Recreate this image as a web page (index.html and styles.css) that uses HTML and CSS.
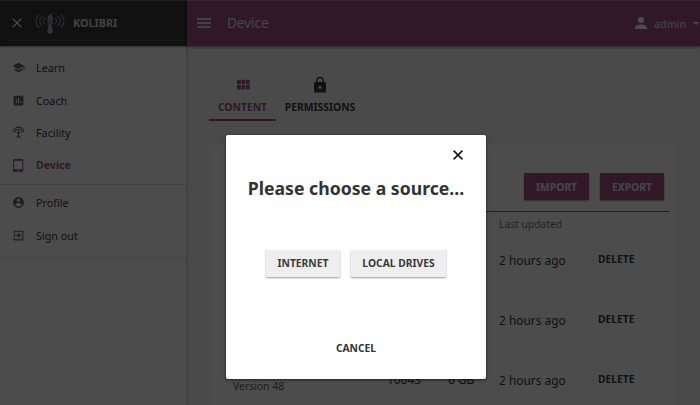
FILE: index.html
```html
<!DOCTYPE html>
<html lang="en">
<head>
<meta charset="utf-8">
<title>Device - Kolibri</title>
<link rel="stylesheet" href="styles.css">
</head>
<body>
<div class="app">
  <aside class="sidebar">
    <header class="brand">
      <svg class="brand-close" viewBox="0 0 10 10"><path d="M.6.6 9.4 9.4M9.4.6.6 9.4"/></svg>
      <svg class="brand-logo" viewBox="0 0 30 24">
        <g fill="none" stroke="#8b95a2" stroke-width="1.1">
          <path d="M4.2 3.5Q-2.5 10 4.2 16.8M7.3 5.2Q2 10 7.3 15.2M10 7Q7 10 10 13.5"/>
          <path d="M25.8 3.5Q32.5 10 25.8 16.8M22.7 5.2Q28 10 22.7 15.2M20 7Q23 10 20 13.5"/>
        </g>
        <path fill="#94a3b0" d="M21 .8 16.2 4.1Q18.5 6 18 9.5L17.3 14H13L12.4 8.4Q12.4 4.8 14.8 3.6Z"/>
        <path fill="#788a9a" d="M13 8.5h4.8L17 14.5h-3.6Z"/>
        <path fill="#b79dba" d="M13.8 14h2.6l1.6 6.5q-.7 2.2-2.9 2.2t-2.9-2.2Z"/>
      </svg>
      <span class="brand-name">KOLIBRI</span>
    </header>
    <nav class="menu">
      <a class="item"><svg viewBox="0 0 24 24"><path d="M5 13.2v4L12 21l7-3.8v-4L12 17zM12 3 1 9l11 6 9-4.9V17h2V9z"/></svg>Learn</a>
      <a class="item"><svg viewBox="0 0 24 24"><path d="M19 3H5a2 2 0 0 0-2 2v14a2 2 0 0 0 2 2h14a2 2 0 0 0 2-2V5a2 2 0 0 0-2-2zM9 17H7v-7h2zm4 0h-2V7h2zm4 0h-2v-4h2z"/></svg>Coach</a>
      <a class="item"><svg viewBox="0 0 24 24"><path d="M12 5a7 7 0 0 0-7 7h2a5 5 0 0 1 10 0h2a7 7 0 0 0-7-7zm1 9.3a2.5 2.5 0 1 0-2 0v3.3L7.6 21 9 22.4l3-3 3 3 1.4-1.4-3.4-3.4zM12 1A11 11 0 0 0 1 12h2a9 9 0 0 1 18 0h2A11 11 0 0 0 12 1z"/></svg>Facility</a>
      <a class="item active"><svg viewBox="0 0 24 24"><path d="M18.5 0h-14A2.5 2.5 0 0 0 2 2.5v19A2.5 2.5 0 0 0 4.500 24h14a2.500 2.500 0 0 0 2.500-2.500v-19A2.500 2.500 0 0 0 18.500 0zm-7 23a1.500 1.500 0 1 1 0-3 1.500 1.500 0 0 1 0 3zm7.500-4H4V3h15z"/></svg>Device</a>
    </nav>
    <nav class="menu menu-user">
      <a class="item"><svg viewBox="0 0 24 24"><path d="M12 2a10 10 0 1 0 0 20 10 10 0 0 0 0-20zm0 3a3 3 0 1 1 0 6 3 3 0 0 1 0-6zm0 14.200a7.200 7.200 0 0 1-6-3.220c.03-1.990 4-3.080 6-3.080s5.970 1.090 6 3.080a7.200 7.200 0 0 1-6 3.220z"/></svg>Profile</a>
      <a class="item"><svg viewBox="0 0 24 24"><path d="M10.090 15.590 11.500 17l5-5-5-5-1.410 1.410L12.670 11H3v2h9.670zM19 3H5a2 2 0 0 0-2 2v4h2V5h14v14H5v-4H3v4a2 2 0 0 0 2 2h14a2 2 0 0 0 2-2V5a2 2 0 0 0-2-2z"/></svg>Sign out</a>
    </nav>
  </aside>
  <div class="page">
    <header class="topbar">
      <svg class="burger" viewBox="0 0 14 10"><path d="M0 1h14M0 5h14M0 9h14"/></svg>
      <span class="topbar-title">Device</span>
      <svg class="user-icon" viewBox="4 4 16 16"><path d="M12 12a4 4 0 1 0 0-8 4 4 0 0 0 0 8zm0 2c-2.670 0-8 1.340-8 4v2h16v-2c0-2.660-5.330-4-8-4z"/></svg>
      <span class="user-name">admin</span>
      <i class="caret"></i>
    </header>
    <div class="tabs">
      <div class="tab selected"><svg viewBox="0 0 24 24"><path d="M4 11h5V5H4zm0 7h5v-6H4zm6 0h5v-6h-5zm6 0h5v-6h-5zm-6-7h5V5h-5zm6-6v6h5V5z"/></svg><span>CONTENT</span></div>
      <div class="tab"><svg viewBox="0 0 24 24"><path d="M18 8h-1V6A5 5 0 0 0 7 6v2H6a2 2 0 0 0-2 2v10a2 2 0 0 0 2 2h12a2 2 0 0 0 2-2V10a2 2 0 0 0-2-2zm-6 9a2 2 0 1 1 0-4 2 2 0 0 1 0 4zm3.100-9H8.900V6a3.100 3.100 0 0 1 6.200 0z"/></svg><span>PERMISSIONS</span></div>
    </div>
    <main class="panel">
      <div class="actions"><button class="btn primary import">IMPORT</button><button class="btn primary">EXPORT</button></div>
      <div class="row head"><span></span><span></span><span></span><span>Last updated</span><span></span></div>
      <div class="row"><span></span><span></span><span></span><span>2 hours ago</span><b>DELETE</b></div>
      <div class="row"><span></span><span></span><span></span><span>2 hours ago</span><b>DELETE</b></div>
      <div class="row"><small>Version 48</small><span>10643</span><span>6 GB</span><span>2 hours ago</span><b>DELETE</b></div>
    </main>
  </div>
</div>
<div class="backdrop">
  <section class="modal" role="dialog">
    <svg class="modal-close" viewBox="0 0 10 10"><path d="M.6.6 9.4 9.4M9.4.6.6 9.4"/></svg>
    <h1>Please choose a source...</h1>
    <div class="choices"><button class="btn internet">INTERNET</button><button class="btn drives">LOCAL DRIVES</button></div>
    <button class="cancel">CANCEL</button>
  </section>
</div>
</body>
</html>
```
FILE: styles.css
```css
* { box-sizing: border-box; }
body { margin: 0; overflow: hidden; font-family: "Noto Sans", sans-serif; font-size: 11px; color: #3a3a3a; }
button { font-family: inherit; border: 0; padding: 0; }
svg { display: block; flex: none; }
.app { display: flex; width: 700px; height: 405px; overflow: hidden; background: #f8f8f8; }

.sidebar { width: 187px; flex: none; background: #fff; border-right: 1px solid #dedede; box-shadow: 1px 0 1px rgba(0,0,0,.12); }
.brand { display: flex; align-items: center; width: 187px; height: 46px; padding-left: 12px; background: #3a3a3a; border-top: 1px solid #666; box-shadow: 0 1px 2px rgba(0,0,0,.4); }
.brand-close { width: 10px; height: 10px; margin-top: -1px; stroke: #fff; stroke-width: 1.3; }
.brand-logo { width: 30px; height: 24px; margin: -1px 0 0 13px; }
.brand-name { margin: -2px 0 0 8px; font-weight: 700; font-size: 10.8px; color: #ddd; }
.menu { height: 139px; padding-top: 5px; border-bottom: 1px solid #e8e8e8; }
.menu-user { height: 73px; padding-top: 1px; }
.item { display: flex; align-items: center; height: 32.7px; padding-left: 12px; font-size: 10.8px; }
.item svg { width: 13px; height: 13px; margin-right: 11px; fill: #666; }
.active { color: #a4548a; font-weight: 700; font-size: 10.6px; }
.active svg { fill: #a4548a; }

.page { flex: 1; min-width: 0; }
.topbar { display: flex; align-items: center; height: 46px; padding-left: 10px; background: #a4508a; color: #e8e8e8; border-top: 1px solid #b978a5; box-shadow: 0 1px 3px rgba(0,0,0,.5); }
.burger { width: 14px; height: 10px; margin-top: -1px; stroke: #fff; stroke-width: 1.3; }
.topbar-title { margin: -1px 0 0 16px; font-size: 13.5px; }
.user-icon { width: 12px; height: 12px; margin: -2px 0 0 auto; fill: #fff; }
.user-name { margin: 0 0 0 7px; font-size: 10.7px; }
.caret { margin: -1px 1px 0 7px; border: 3.5px solid transparent; border-top-color: #fff; border-bottom: 0; }

.tabs { display: flex; padding: 30px 0 0 22px; }
.tab { display: flex; flex-direction: column; align-items: center; width: 88px; height: 45px; font-size: 10.35px; font-weight: 700; }
.tab svg { width: 18px; height: 18px; fill: currentColor; }
.tab span { margin-top: 6px; line-height: 14px; white-space: nowrap; }
.tab.selected { width: 67px; color: #a4508a; border-bottom: 2px solid #a4508a; }

.panel { width: 466px; height: 260px; margin: 24px 0 0 22px; padding: 28px 6px 0 24px; background: #fff; }
.actions { display: flex; justify-content: flex-end; gap: 11px; height: 39px; padding-right: 5px; border-bottom: 1.5px solid #666; }
.btn { height: 27px; border-radius: 1px; background: #eee; color: #3a3a3a; font-size: 10.3px; font-weight: 700; box-shadow: 0 1px 2px rgba(0,0,0,.4); }
.primary { width: 64px; background: #a4508a; color: #e8e8e8; }
.import { width: 65px; }
.row { display: grid; grid-template-columns: 155px 61px 50px 100px 60px; align-items: center; height: 60px; margin-left: -1px; font-size: 11.9px; }
.row > :nth-child(4) { padding: 1px 0 0 1px; }
.row b { padding-bottom: 1px; font-size: 10.3px; }
.row small { padding: 13px 0 0 1px; font-size: 10.4px; color: #666; }
.row.head { height: 17px; padding-top: 4px; font-size: 10.3px; color: #777; }

.backdrop { position: absolute; inset: 0; padding: 135px 0 0 226px; background: rgba(0,0,0,.7); }
.modal { display: flex; flex-direction: column; align-items: center; width: 260px; height: 243.5px; padding-top: 14.5px; background: #fff; border-radius: 2px; box-shadow: 0 1px 3px rgba(0,0,0,.6); }
.modal-close { width: 10px; height: 10px; margin: 0 23px 0 auto; stroke: #111; stroke-width: 1.5; }
.modal h1 { margin: 16.5px 0 0; font-size: 17.65px; line-height: 24px; white-space: nowrap; color: #333; }
.choices { display: flex; gap: 11px; margin: 50px 0 0; }
.choices .btn { padding-bottom: 1px; }
.internet { width: 74px; }
.drives { width: 95px; }
.cancel { margin-top: 63px; background: none; color: #333; font-size: 10.3px; font-weight: 700; line-height: 16px; }
```
